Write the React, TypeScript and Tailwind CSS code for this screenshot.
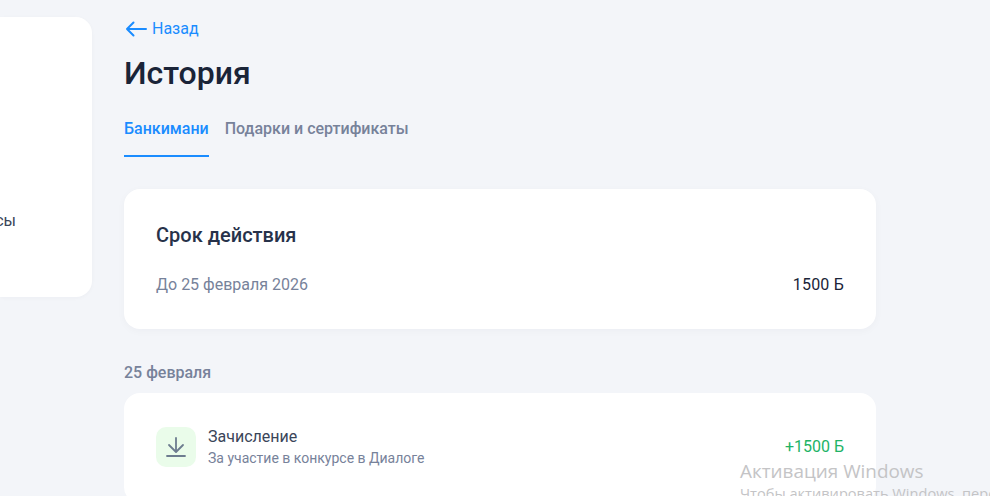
import React from "react";

export default function App() {
  return (
    <div className="relative flex h-[496px] w-[990px] overflow-hidden bg-[#f3f5f9] font-['Roboto',sans-serif]">
      <aside className="mt-[17px] flex h-[280px] w-[92px] shrink-0 items-end justify-end rounded-r-[16px] bg-white pb-[67px] pr-[76px] shadow-[0_1px_4px_rgba(30,40,70,0.03)]">
        <span className="text-[16px] leading-[18px] text-[#3a4559]">сы</span>
      </aside>
      <main className="ml-[32px] flex w-[752px] shrink-0 flex-col pt-[19px]">
        <a className="flex h-[20px] shrink-0 items-center gap-[5px] text-[16px] leading-[20px] text-[#1a8cff]">
          <svg width="23" height="16" viewBox="0 0 23 16" fill="none" stroke="#1a8cff" strokeWidth="2" strokeLinecap="round" strokeLinejoin="round">
            <path d="M22 8H3M9.500 1.500 3 8l6.500 6.500" />
          </svg>
          Назад
        </a>
        <h1 className="mt-[14px] shrink-0 text-[32px] font-medium leading-[40px] text-[#1a2438]">История</h1>
        <div className="mt-[15px] flex h-[48px] shrink-0 gap-[16px] text-[16px] font-medium leading-[20px]">
          <div className="h-[49px] border-b-2 border-[#1a8cff] pt-[11px] text-[#1a8cff]">Банкимани</div>
          <div className="pt-[11px] text-[#77829a]">Подарки и сертификаты</div>
        </div>
        <section className="mt-[33px] flex h-[140px] shrink-0 flex-col rounded-[16px] bg-white px-[32px] pt-[32px] shadow-[0_2px_8px_rgba(30,40,70,0.03)]">
          <h2 className="text-[20px] font-medium leading-[28px] text-[#27324a]">Срок действия</h2>
          <div className="mt-[26px] flex items-center justify-between text-[16px] leading-[20px]">
            <span className="text-[#77829a]">До 25 февраля 2026</span>
            <span className="tracking-[0.2px] text-[#1a2438]">1500 Б</span>
          </div>
        </section>
        <div className="mt-[35px] shrink-0 text-[16px] font-medium leading-[18px] text-[#77829a]">25 февраля</div>
        <section className="mt-[11px] flex h-[110px] shrink-0 items-start justify-between rounded-[16px] bg-white px-[32px] pt-[34px]">
          <div className="flex gap-[12px]">
            <div className="flex h-[40px] w-[40px] items-center justify-center rounded-[10px] bg-[#eafcea]">
              <svg width="20" height="20" viewBox="0 0 20 20" fill="none" stroke="#6d7c8f" strokeWidth="1.800" strokeLinecap="round" strokeLinejoin="round">
                <path d="M10 1v13M3 8l7 7 7-7M1 19h18" />
              </svg>
            </div>
            <div className="flex flex-col">
              <span className="text-[16px] leading-[20px] text-[#3a4559]">Зачисление</span>
              <span className="mt-[2px] text-[14px] leading-[18px] text-[#77829a]">За участие в конкурсе в Диалоге</span>
            </div>
          </div>
          <span className="mt-[10px] text-[16px] leading-[20px] text-[#21b366]">+1500 Б</span>
        </section>
      </main>
      <div className="pointer-events-none absolute left-[740px] top-[459px] whitespace-nowrap font-['Open_Sans',sans-serif] text-[#c4c4c6]">
        <div className="text-[18.900px] leading-[24px]">Активация Windows</div>
        <div className="mt-[1px] text-[14.600px] leading-[18px]">Чтобы активировать Windows, перейдите</div>
      </div>
    </div>
  );
}
